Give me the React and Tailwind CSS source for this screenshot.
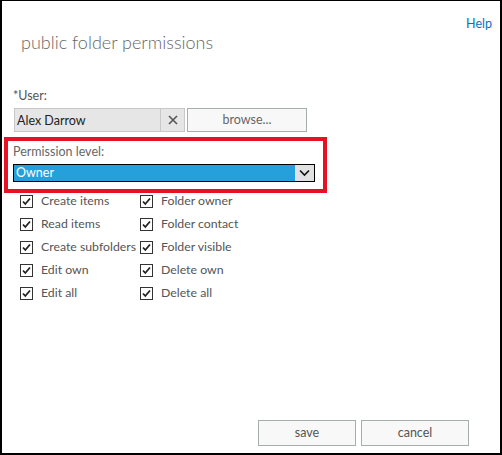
import { useState } from 'react';

const font = { fontFamily: 'Lato, "Segoe UI", "Liberation Sans", sans-serif' };

const leftPerms = ['Create items', 'Read items', 'Create subfolders', 'Edit own', 'Edit all'];
const rightPerms = ['Folder owner', 'Folder contact', 'Folder visible', 'Delete own', 'Delete all'];

const CheckBox = ({ label }) => (
  <div className="flex items-start h-[23px]">
    <div className="w-[13px] h-[13px] border border-[#333] bg-white flex items-center justify-center shrink-0">
      <svg width="11" height="11" viewBox="0 0 11 11">
        <path d="M2 5.5 L4.3 8 L9 2.5" fill="none" stroke="#222" strokeWidth="1.8" />
      </svg>
    </div>
    <span className="ml-[8px] -mt-[2px] text-[12.3px] leading-[16px] text-[#555] whitespace-nowrap">{label}</span>
  </div>
);

const App = () => {
  const [user] = useState('Alex Darrow');

  return (
    <div
      className="w-[502px] h-[455px] bg-white border-black border-t border-x-2 border-b-2 flex flex-col"
      style={font}
    >
      {/* header */}
      <div className="flex justify-between">
        <h1 className="pl-[19px] pt-[29px] text-[18px] leading-[24px] font-light text-[#666]">
          public folder permissions
        </h1>
        <a className="pr-[8px] pt-[15px] text-[12.5px] leading-[16px] text-[#0072c6]">Help</a>
      </div>

      <div className="pl-[11px] mt-[34px] text-[12.5px] leading-[16px] text-[#555]">*User:</div>

      <div className="flex ml-[12px] mt-[4px] h-[24px]">
        <div className="flex w-[171px] bg-[#e6e6e6] border border-[#c8c8c8]">
          <div className="flex-1 px-[2px] pt-[2px] text-[12.5px] leading-[20px] text-[#222]">{user}</div>
          <div className="w-[24px] border-l border-[#c8c8c8] flex items-center justify-center">
            <svg width="10" height="10" viewBox="0 0 10 10">
              <path d="M1 1 L9 9 M9 1 L1 9" stroke="#555" strokeWidth="1.6" />
            </svg>
          </div>
        </div>
        <button className="ml-[2px] w-[120px] bg-[#f8f8f8] border border-[#a6adad] text-[12.5px] text-[#666]">
          browse...
        </button>
      </div>

      {/* permission level */}
      <div className="ml-[2px] mt-[5px] w-[323px] border-4 border-[#e81123] pl-[5px] pr-[8px] pt-[3px] pb-[7px]">
        <div className="text-[12.5px] leading-[16px] text-[#666]">Permission level:</div>
        <div className="mt-[4px] h-[18px] flex border border-black">
          <div className="flex-1 bg-[#26a0da] text-white text-[12.5px] leading-[16px] pl-[2px]">Owner</div>
          <div className="w-[19px] bg-[#e1e1e1] flex items-center justify-center">
            <svg width="11" height="8" viewBox="0 0 11 8">
              <path d="M1 1.5 L5.5 6 L10 1.5" fill="none" stroke="#111" strokeWidth="1.6" />
            </svg>
          </div>
        </div>
      </div>

      {/* checkboxes */}
      <div className="flex pl-[18px] mt-[2px]">
        <div className="w-[120px] flex flex-col">
          {leftPerms.map((p) => (
            <CheckBox key={p} label={p} />
          ))}
        </div>
        <div className="flex flex-col">
          {rightPerms.map((p) => (
            <CheckBox key={p} label={p} />
          ))}
        </div>
      </div>

      {/* footer */}
      <div className="mt-auto flex justify-end gap-[5px] pr-[31px] pb-[7px]">
        <button className="w-[98px] h-[26px] bg-[#f8f8f8] border border-[#a6adad] text-[12.5px] text-[#555]">
          save
        </button>
        <button className="w-[108px] h-[26px] bg-[#f8f8f8] border border-[#a6adad] text-[12.5px] text-[#555]">
          cancel
        </button>
      </div>
    </div>
  );
};

export default App;
